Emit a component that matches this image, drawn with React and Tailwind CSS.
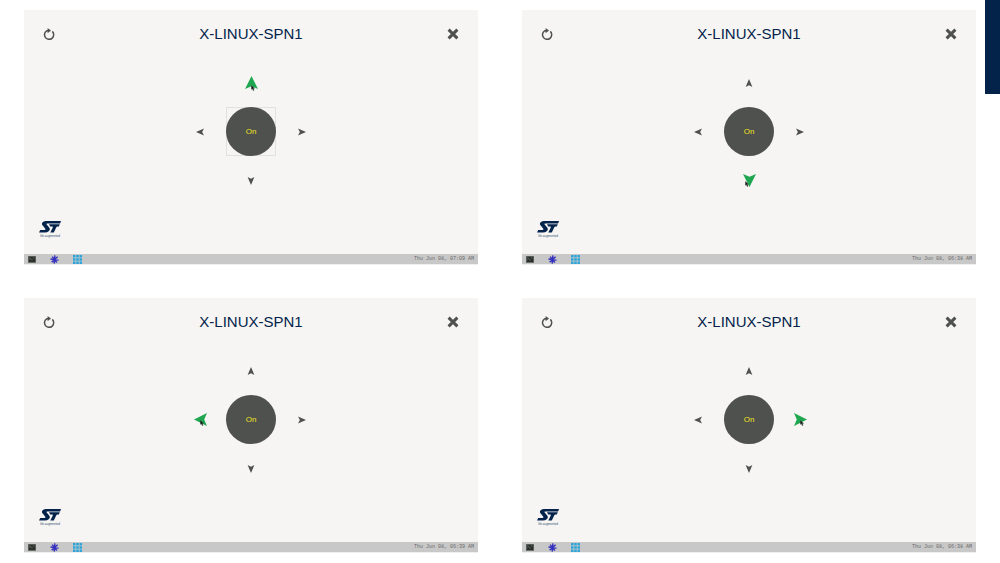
const TURN = {
  up: '',
  right: 'rotate-90',
  down: 'rotate-180',
  left: '-rotate-90',
};

const CURSOR_SPOT = {
  up: 'left-1/2 top-1/2 mt-0.5',
  right: 'left-1/2 top-1/2',
  down: 'right-1/2 top-1/2',
  left: 'left-1/2 top-1/2',
};

function Arrow({ direction, active }) {
  return (
    <button
      type="button"
      aria-label={`Move ${direction}`}
      aria-pressed={active}
      className="relative flex size-full items-center justify-center"
    >
      <svg
        viewBox="0 0 13 13"
        className={`${active ? 'size-[13px] text-[#1fa650]' : 'size-[8px] text-[#4f514e]'} ${TURN[direction]}`}
      >
        <path d={active ? 'M6.5 0 13 13 6.5 10.2 0 13Z' : 'M6.5 0 12 13 6.5 10 1 13Z'} fill="currentColor" />
      </svg>
      {active && (
        <svg viewBox="0 0 4 6" className={`absolute h-[6px] w-[4px] ${CURSOR_SPOT[direction]}`}>
          <path
            d="M.3.2V4.4L1.3 3.7 2.2 5.7 3.1 5.3 2.3 3.4H3.7Z"
            fill="#111"
            stroke="#54755f"
            strokeWidth=".3"
          />
        </svg>
      )}
    </button>
  );
}

function RefreshIcon() {
  return (
    <svg viewBox="0 0 12 12" className="size-[12px]" fill="none" stroke="#4f514e" strokeWidth="1.5">
      <path d="M9.3 3.4A4.6 4.6 0 1 1 3.4 3Q4.5 2.4 6.4 2.5" />
      <path d="M4.6 0 8 2.5 4.6 5.2Z" fill="#4f514e" stroke="none" />
    </svg>
  );
}

function CloseIcon() {
  return (
    <svg viewBox="0 0 12 12" className="size-[12px]" stroke="#4f514e" strokeWidth="3">
      <path d="M1.6 1.6 10.4 10.4M10.4 1.6 1.6 10.4" />
    </svg>
  );
}

function Logo() {
  return (
    <div className="flex w-[22px] flex-col items-center">
      <svg viewBox="0 0 22 12" className="h-[12px] w-[22px]" role="img" aria-label="ST">
        <path
          d="M7 0H22L21.1 2.4H8.2Q7 2.5 7.5 3.3L10.2 6.6Q11.7 8.7 9.7 10.3 8.3 11.6 5.9 11.6H0L1.2 9H5.6Q7 8.7 6.3 7.7L3.7 4.6Q2 2.5 4 .9 5.2 0 7 0Z"
          fill="#03234b"
        />
        <path
          d="M10 3.2H20.8L19.8 5.5H18.5Q17.6 5.6 17.2 6.5L14.8 11.6H11.3L13.8 6.4Q14.2 5.5 13.2 5.5H11.2Z"
          fill="#03234b"
        />
      </svg>
      <span className="mt-px whitespace-nowrap text-[3px] leading-[4px] text-[#35506f]">life.augmented</span>
    </div>
  );
}

function Taskbar({ time }) {
  return (
    <footer className="flex h-[11px] items-center border-b border-[#efeeed] bg-[#c8c8c8] px-1">
      <button type="button" aria-label="Terminal">
        <svg viewBox="0 0 8 7" className="h-[7px] w-[8px]">
          <path d="M0 0H8V7H0Z" fill="#6d706d" />
          <path d="M.7.7H7.3V6H.7Z" fill="#2b302d" />
          <path d="M1.4 1.6 2.6 2.5 1.4 3.4M3 3.8H4.5M5 2H6.4" fill="none" stroke="#9ba39d" strokeWidth=".5" />
        </svg>
      </button>
      <button type="button" aria-label="Demo" className="ml-[14px]">
        <svg viewBox="0 0 9 9" className="size-[9px]" stroke="#3430bd" strokeWidth="1.4">
          <path d="M4.9.4 4.2 8.6M.5 4 8.5 5.1M7.6 1.7 1.6 7.3M2.2 1.6 6.8 7.7" />
        </svg>
      </button>
      <button type="button" aria-label="Applications" className="ml-[14px]">
        <svg viewBox="0 0 9 9" className="size-[9px]">
          <path
            d="M0 0H2.5V2.5H0ZM3.2 0H5.8V2.5H3.2ZM6.5 0H9V2.5H6.5ZM0 3.2H2.5V5.8H0ZM3.2 3.2H5.8V5.8H3.2ZM6.5 3.2H9V5.8H6.5ZM0 6.5H2.5V9H0ZM3.2 6.5H5.8V9H3.2ZM6.5 6.5H9V9H6.5Z"
            fill="#2da5da"
          />
        </svg>
      </button>
      <time className="ml-auto font-['Liberation_Mono',monospace] text-[5px] leading-[10px] text-[#686868]">{time}</time>
    </footer>
  );
}

function Screen({ active, time, focused }) {
  return (
    <section className="flex min-h-[255px] flex-col bg-[#f6f5f3]">
      <header className="flex h-12 items-center justify-between px-[19px]">
        <button type="button" aria-label="Refresh"><RefreshIcon /></button>
        <h2 className="text-[15px] leading-5 text-[#03234b]">X-LINUX-SPN1</h2>
        <button type="button" aria-label="Close"><CloseIcon /></button>
      </header>
      <div className="mx-auto grid grid-cols-[50px_50px_50px] grid-rows-[49px_49px_49px] gap-x-px">
        <div className="col-start-2"><Arrow direction="up" active={active === 'up'} /></div>
        <div className="col-start-1 row-start-2"><Arrow direction="left" active={active === 'left'} /></div>
        <div className={`col-start-2 row-start-2 border ${focused ? 'border-[#e2e1df]' : 'border-transparent'}`}>
          <button
            type="button"
            className="-m-px flex h-[49px] w-[50px] items-center justify-center rounded-[50%] bg-[#4f514e] text-[8px] leading-[10px] text-[#f2e31c]"
          >
            On
          </button>
        </div>
        <div className="col-start-3 row-start-2"><Arrow direction="right" active={active === 'right'} /></div>
        <div className="col-start-2 row-start-3"><Arrow direction="down" active={active === 'down'} /></div>
      </div>
      <div className="mt-auto">
        <div className="mb-4 ml-[15px]"><Logo /></div>
        <Taskbar time={time} />
      </div>
    </section>
  );
}

const SCREENS = [
  { active: 'up', time: 'Thu Jun 08, 07:09 AM', focused: true },
  { active: 'down', time: 'Thu Jun 08, 06:38 AM' },
  { active: 'left', time: 'Thu Jun 08, 06:39 AM' },
  { active: 'right', time: 'Thu Jun 08, 06:38 AM' },
];

export default function App() {
  return (
    <main className="relative min-h-screen bg-white px-6 py-2.5 font-['Liberation_Sans',Arial,sans-serif]">
      <div className="grid grid-cols-2 gap-x-11 gap-y-[33px]">
        {SCREENS.map((screen) => (
          <Screen key={screen.active} {...screen} />
        ))}
      </div>
      <div className="absolute right-0 top-0 h-[94px] w-[15px] bg-[#03234b]" />
    </main>
  );
}
